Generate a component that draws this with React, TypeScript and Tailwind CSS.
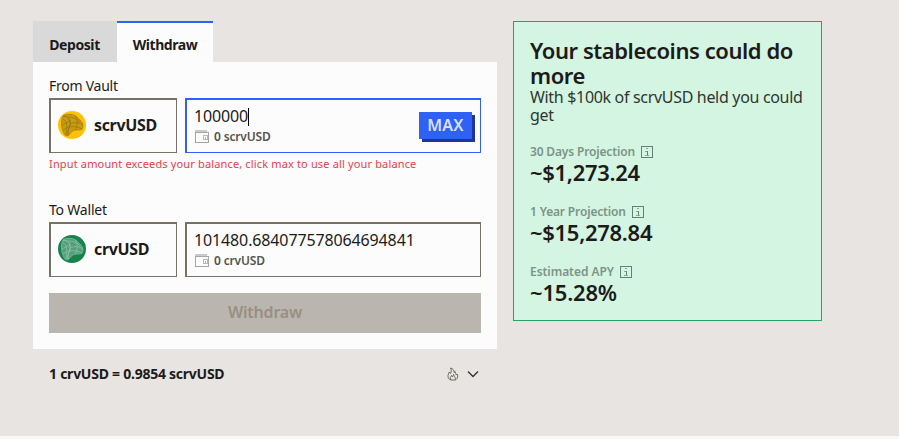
type TokenProps = {
  symbol: string;
  disc: string;
  shade: string;
  line: string;
};

const projections = [
  { label: '30 Days Projection', value: '~$1,273.24', labelClass: 'tracking-[-0.16px]', valueClass: 'tracking-[-0.3px]' },
  { label: '1 Year Projection', value: '~$15,278.84', labelClass: 'tracking-[-0.16px]', valueClass: 'tracking-[-0.3px]' },
  { label: 'Estimated APY', value: '~15.28%', labelClass: 'tracking-[-0.05px]', valueClass: 'tracking-[-0.2px]' },
];

function TokenIcon({ disc, shade, line }: Omit<TokenProps, 'symbol'>) {
  return (
    <svg viewBox="0 0 28 28" className="size-7 shrink-0">
      <circle cx="14" cy="14" r="14" fill={disc} />
      <path d="M5 5C8 2.5 16 2.5 19.5 6.5C22 9 25 11 25 15C25 18 23 19.5 19 19C15 19 13 21 11 24C9.5 25.5 7 25 6 22.5C3 17 2.5 8.5 5 5Z" fill={shade} />
      <g fill="none" stroke={line} strokeWidth=".5">
        <path d="M5 5C8 2.5 16 2.5 19.5 6.5C22 9 25 11 25 15C25 18 23 19.5 19 19C15 19 13 21 11 24C9.5 25.5 7 25 6 22.5C3 17 2.5 8.5 5 5Z" />
        <path d="M5 5C10 5 13 9 12 14C11.5 18 9 19 10 24" strokeWidth=".8" />
        <path d="M5 8C8 9 10 14 8 24M12 13C16 11 21 11 25 14M12 16C16 15 20 16 24 18M10 6C15 6 20 8 22 11" />
        <path d="M17 5C20 9 20 15 17 19M4 14L12 10M5 19L12 15" />
      </g>
    </svg>
  );
}

function TokenBox({ symbol, ...icon }: TokenProps) {
  return (
    <div className="flex w-32 items-center gap-2 border-t-2 border-r border-b border-l-2 border-[#777268] pb-[3px] pl-[7px]">
      <TokenIcon {...icon} />
      <span className="text-base leading-6 font-bold tracking-[-0.35px]">{symbol}</span>
    </div>
  );
}

function WalletIcon() {
  return (
    <svg viewBox="0 0 14 13" className="h-[13px] w-3.5" fill="none" stroke="#a6a5a1" shapeRendering="crispEdges">
      <path d="M0 1H12" stroke="#cbcac7" strokeWidth="2" />
      <path d="M.5 2.5H13.5V12.5H.5Z" />
      <path d="M13 5.5H8.5V9.5H13M10.5 7V9M12 6v3" stroke="#b9b8b5" />
    </svg>
  );
}

function Balance({ text }: { text: string }) {
  return (
    <div className="flex h-[17px] items-center gap-[5px] pt-0.5 pl-px text-xs leading-4 font-semibold tracking-[-0.17px] text-[#55534e]">
      <WalletIcon />
      <span>{text}</span>
    </div>
  );
}

function InfoIcon() {
  return (
    <svg viewBox="0 0 12 12" className="size-3" fill="none" stroke="#657f70" shapeRendering="crispEdges">
      <rect x=".5" y=".5" width="11" height="11" />
      <path d="M5 2.5H7M4 5.5H6M4 9.5H8" stroke="#8aa697" />
      <path d="M6.5 5V9" />
    </svg>
  );
}

function FlameIcon() {
  return (
    <svg viewBox="0 0 12 14" className="h-3.5 w-3" fill="none" stroke="#66635f" strokeWidth=".95" strokeLinejoin="round">
      <path d="M4 13C1.5 12.5.8 10.5 1 8.5c.2-1.5 1-2 1.2-3.5l1.3 1.5C4.5 4.5 4.5 2.5 3.5 1 6 1.5 7.2 3.5 7.2 5.5L8 4.5c0 1.5 1.2 2 1.2 3.5l1-1c1.3 3-.2 5.5-2.2 6Z" />
      <path d="M4 13C2.5 11.5 3.5 10 4.5 8.5l1 1.5L6.5 7.5C7 9.5 9.5 11 8 13" />
    </svg>
  );
}

export default function App() {
  return (
    <div className="h-[439px] overflow-hidden border-b-3 border-[#f8f8f8] bg-[#e8e4e1] font-['Noto_Sans','Open_Sans',sans-serif] text-[#1c1b19]">
      <div className="flex items-start gap-4 pt-[21px] pl-[33px]">
        <div className="w-[464px]">
          <div className="flex h-[41px] text-sm font-bold">
            <button className="w-[84px] bg-[#d9d9d9] pt-1.5 pr-px tracking-[-0.4px]">Deposit</button>
            <button className="w-24 border-t-2 border-[#2f62f4] bg-[#fcfcfc] pt-1 tracking-[-0.45px]">Withdraw</button>
          </div>

          <div className="h-[287px] bg-[#fcfcfc] px-4 pt-[15px]">
            <div className="h-[21px] text-sm leading-[18px] tracking-[-0.25px]">From Vault</div>
            <div className="flex h-[55px] gap-2">
              <TokenBox symbol="scrvUSD" disc="#ffc107" shade="#c99c10" line="#806719" />
              <div className="flex flex-1 items-center justify-between border-t-2 border-r border-b border-l-2 border-[#2f62f4] pr-2 pb-px pl-[7px]">
                <div>
                  <div className="flex h-5 items-center text-base tracking-[-0.15px]">
                    <span className="-mt-0.5">100000</span>
                    <span className="h-[18px] w-px bg-black" />
                  </div>
                  <Balance text="0 scrvUSD" />
                </div>
                <button className="mb-px h-[27px] w-[53px] bg-[#2f62f4] text-base leading-6 font-semibold tracking-[0.3px] text-[#d7e0fc] shadow-[3px_3px_0_#203595]">MAX</button>
              </div>
            </div>
            <div className="h-[47px] pt-[3px] text-[11px] leading-4 tracking-[0.15px] text-[#e83b4d]">
              Input amount exceeds your balance, click max to use all your balance
            </div>

            <div className="h-[22px] text-sm leading-[20px] tracking-[-0.2px]">To Wallet</div>
            <div className="flex h-[55px] gap-2">
              <TokenBox symbol="crvUSD" disc="#17824e" shade="#55a07b" line="#a3d1ba" />
              <div className="flex flex-1 items-center border-t-2 border-r border-b border-l-2 border-[#777268] pb-px pl-[7px]">
                <div>
                  <div className="h-5 text-base leading-[18px] tracking-[-0.13px]">101480.684077578064694841</div>
                  <Balance text="0 crvUSD" />
                </div>
              </div>
            </div>

            <button className="mt-4 h-10 w-full bg-[#bab5ae] pb-0.5 text-base font-semibold tracking-[-0.2px] text-[#988f83]">Withdraw</button>
          </div>

          <div className="flex h-[50px] items-center justify-between px-4">
            <span className="text-sm font-bold tracking-[-0.25px]">1 crvUSD = 0.9854 scrvUSD</span>
            <div className="flex items-center gap-2 pr-0.5 pb-px">
              <FlameIcon />
              <svg viewBox="0 0 12 8" className="h-2 w-3" fill="none" stroke="#33312e" strokeWidth="1.3">
                <path d="M1 1.5 6 6.5 11 1.5" />
              </svg>
            </div>
          </div>
        </div>

        <div className="h-[300px] w-[309px] border border-[#24a566] bg-[#d4f5e2] pt-4 pl-4">
          <h2 className="text-[22px] leading-[25px] font-semibold tracking-[-0.43px]">
            Your stablecoins could do
            <br />
            more
          </h2>
          <p className="text-base leading-[18px] tracking-[-0.32px] text-[#30362f]">
            With $100k of scrvUSD held you could
            <br />
            get
          </p>
          <div className="mt-5 flex flex-col gap-[19px]">
            {projections.map((item) => (
              <div key={item.label} className="h-[41px]">
                <div className="flex h-4 items-center gap-1.5 text-xs font-semibold text-[#7c9486]">
                  <span className={item.labelClass}>{item.label}</span>
                  <InfoIcon />
                </div>
                <div className={`text-[22px] leading-[24px] font-semibold ${item.valueClass}`}>{item.value}</div>
              </div>
            ))}
          </div>
        </div>
      </div>
    </div>
  );
}
